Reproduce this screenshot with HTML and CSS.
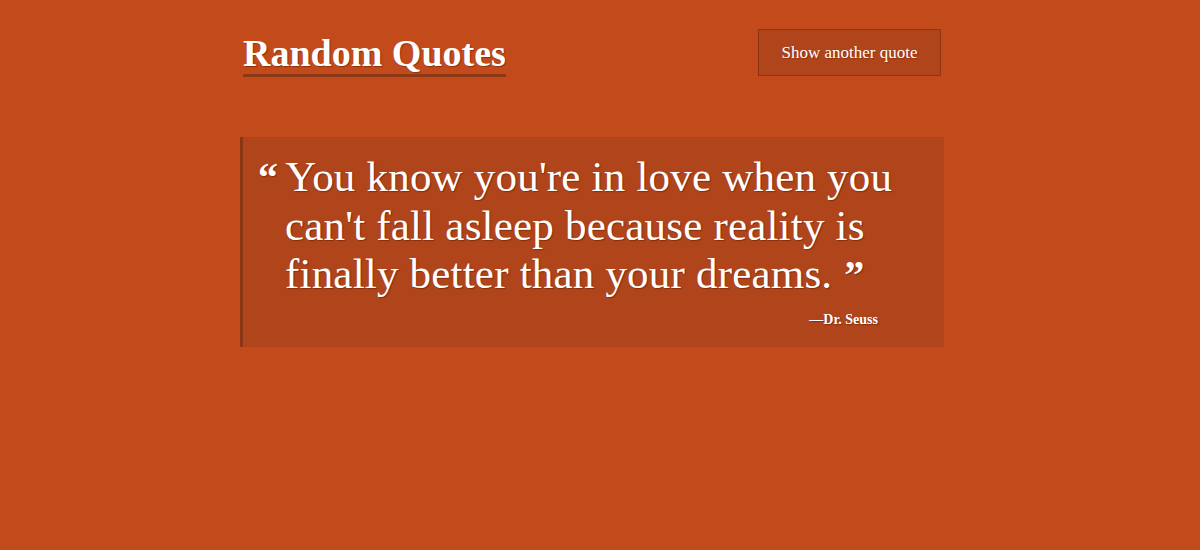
FILE: index.html
```html
<!DOCTYPE html>
<html>
<head>
<meta charset="utf-8">
<link rel="stylesheet" href="styles.css">
</head>
<body>
<div class="container">
  <header class="header">
    <h1 class="title">Random Quotes</h1>
    <button class="btn">Show another quote</button>
  </header>
  <blockquote class="quote">
    <p class="quote-text"><span class="mark open">&ldquo;</span>You know you're in love when you can't fall asleep because reality is finally better than your dreams.<span class="mark close">&rdquo;</span></p>
    <p class="author">&mdash;Dr. Seuss</p>
  </blockquote>
</div>
</body>
</html>
```
FILE: styles.css
```css
html, body {
  margin: 0;
  padding: 0;
}
body {
  background: #c34a1a;
  color: #fff;
  font-family: "Liberation Serif", "DejaVu Serif", serif;
  height: 550px;
}
.container {
  width: 720px;
  margin: 0 auto;
}
.header {
  width: 704px;
  display: flex;
  justify-content: space-between;
  align-items: flex-start;
  padding-top: 29px;
}
.title {
  margin: 4px 0 0 3px;
  font-size: 38px;
  font-weight: bold;
  line-height: 40px;
  padding-bottom: 1px;
  border-bottom: 3px solid #8b3816;
  text-shadow: 1px 1px 1px rgba(90, 25, 0, 0.5);
}
.btn {
  width: 183px;
  height: 47px;
  margin-right: 3px;
  background: #b0441a;
  border: 1px solid #8a3513;
  color: #fff;
  font-family: "Liberation Serif", serif;
  font-size: 17px;
  text-shadow: 1px 1px 1px rgba(90, 25, 0, 0.4);
  padding: 0;
}
.quote {
  width: 701px;
  margin: 60px 0 0 0;
  background: #b0441a;
  border-left: 3px solid #8a3513;
  padding: 16px 0 19px 0;
}
.quote-text {
  margin: 0;
  padding: 0 40px 0 42px;
  font-size: 43px;
  line-height: 48px;
  letter-spacing: 0.2px;
  text-shadow: 1px 1px 1px rgba(90, 25, 0, 0.5);
}
.mark {
  font-weight: bold;
  font-size: 40px;
}
.open {
  margin-left: -27px;
  margin-right: 7px;
}
.close {
  margin-left: 12px;
}
.author {
  margin: 13px 0 0 0;
  padding-right: 66px;
  text-align: right;
  font-size: 14px;
  font-weight: bold;
  text-shadow: 1px 1px 1px rgba(90, 25, 0, 0.5);
}
```
